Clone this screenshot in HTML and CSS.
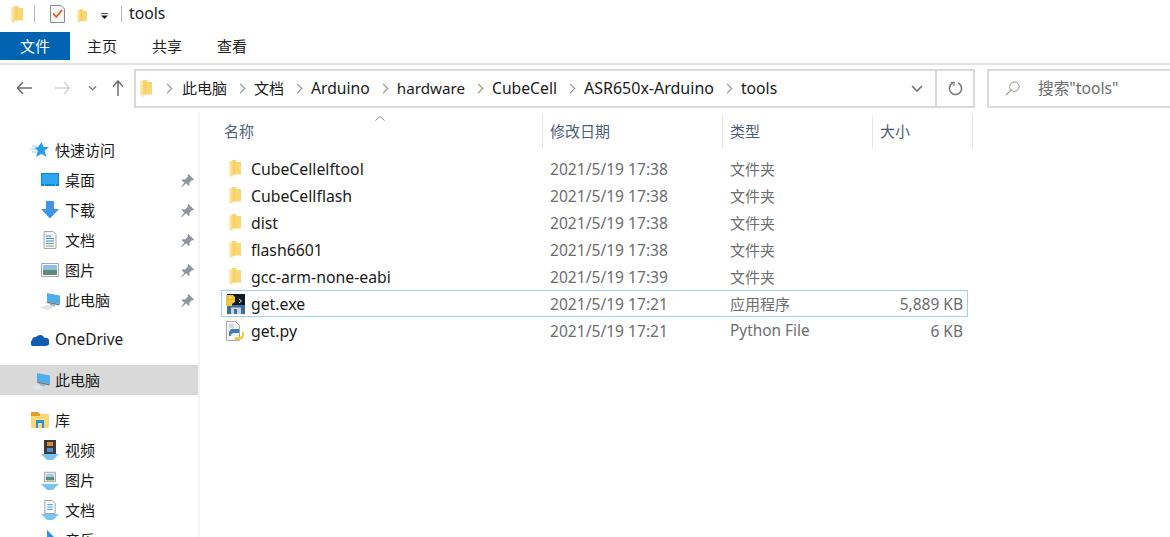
FILE: index.html
```html
<!DOCTYPE html>
<html lang="zh-CN">
<head>
<meta charset="utf-8">
<title>tools</title>
<link rel="stylesheet" href="styles.css">
</head>
<body>
<svg class="defs" width="0" height="0" aria-hidden="true">
  <defs>
    <linearGradient id="fold" x1="0" y1="0" x2="1" y2="0">
      <stop offset="0" stop-color="#fdf0c0"/><stop offset=".45" stop-color="#fbe08e"/><stop offset="1" stop-color="#f7cf68"/>
    </linearGradient>
    <symbol id="folder" viewBox="0 0 12 17">
      <path d="M3 0h4l1 2h4v12.500H3z" fill="#fad773"/>
      <path d="M0 .5l5 1.500v12.500H3.500V17L0 15.500z" fill="url(#fold)"/>
      <path d="M5 2h1v12.500H5z" fill="#f5cc62"/>
    </symbol>
    <symbol id="pin" viewBox="0 0 14 14">
      <path d="M8 0l6 6-1 1-1-.5-3 3 .3 2.500-1 1-2.800-3L1 14H0l3.500-4.500L.8 6.700l1-1 2.500.3 3-3L7 2z" fill="#8e959c"/>
    </symbol>
    <symbol id="pc" viewBox="0 0 20 17">
      <path d="M0 14.500l7-2.500 7 2-6 3z" fill="#dfe3e6"/>
      <path d="M7 0l13 2.500v8.500L7 8.500z" fill="#4faee8"/>
      <path d="M7 8.500L20 11l-1 1.500-12-2.500z" fill="#6f7d88"/>
      <path d="M10 10.500l5 1v2l-5-1z" fill="#a9b3ba"/>
    </symbol>
    <symbol id="tray" viewBox="0 0 18 6">
      <path d="M0 0h18l-6 6H6z" fill="#7cc4f0"/>
    </symbol>
  </defs>
</svg>

<header class="titlebar">
  <svg class="qa-folder"><use href="#folder"/></svg>
  <span class="qa-sep"></span>
  <svg class="qa-check" viewBox="0 0 15 18">
    <path d="M.5.500h10.500l3.500 3.500v13.500H.5z" fill="#f7f7f7" stroke="#8a8a8a"/>
    <path d="M3 8.500l3.300 3.500L12 5" fill="none" stroke="#e8541e" stroke-width="1.800"/>
  </svg>
  <svg class="qa-folder2"><use href="#folder"/></svg>
  <svg class="qa-drop" viewBox="0 0 8 7"><path d="M0 0h8v1H0zM0 3h8L4 7z" fill="#111"/></svg>
  <span class="qa-sep qa-sep2"></span>
  <span class="title-text">tools</span>
</header>

<nav class="tabs">
  <span class="tab tab-file">文件</span>
  <span class="tab">主页</span>
  <span class="tab">共享</span>
  <span class="tab">查看</span>
</nav>

<section class="navbar">
  <svg class="nav-back" viewBox="0 0 16 14"><path d="M7 1L1.500 7 7 13M1.500 7H16" fill="none" stroke="#6d6d6d" stroke-width="1.500"/></svg>
  <svg class="nav-fwd" viewBox="0 0 16 14"><path d="M9 1l5.500 6L9 13M14.500 7H0" fill="none" stroke="#d4d4d4" stroke-width="1.500"/></svg>
  <svg class="nav-down" viewBox="0 0 10 6"><path d="M1 1l4 4 4-4" fill="none" stroke="#808080" stroke-width="1.500"/></svg>
  <svg class="nav-up" viewBox="0 0 12 16"><path d="M1 6.500L6 1l5 5.500M6 1v15" fill="none" stroke="#6d6d6d" stroke-width="1.500"/></svg>
  <div class="address">
    <svg class="addr-folder"><use href="#folder"/></svg>
    <span class="crumb crumb-first crumb-narrow">此电脑</span>
    <span class="crumb crumb-narrow">文档</span>
    <span class="crumb">Arduino</span>
    <span class="crumb crumb-hw">hardware</span>
    <span class="crumb">CubeCell</span>
    <span class="crumb crumb-wide">ASR650x-Arduino</span>
    <span class="crumb">tools</span>
    <span class="addr-spacer"></span>
    <svg class="addr-chev" viewBox="0 0 12 7"><path d="M1 1l5 5 5-5" fill="none" stroke="#6d6d6d" stroke-width="1.500"/></svg>
    <span class="addr-refresh">
      <svg viewBox="0 0 16 16"><path d="M5 2.200A6.500 6.500 0 1 0 11 2.200" fill="none" stroke="#7d7d7d" stroke-width="1.800"/><path d="M3 1.500h3.500V5" fill="none" stroke="#7d7d7d" stroke-width="1.300"/></svg>
    </span>
  </div>
  <div class="search">
    <svg viewBox="0 0 16 16"><circle cx="10" cy="6" r="5" fill="none" stroke="#8c8c8c" stroke-width="1"/><path d="M6.500 9.500L1 15" stroke="#b08a6a" stroke-width="1.200"/></svg>
    <span>搜索"tools"</span>
  </div>
</section>

<main class="main">
  <aside class="sidebar">
    <div class="side-row top">
      <svg class="ic" viewBox="0 0 18 16"><path d="M10.500 0l2 5H18l-4.500 3.800L15.500 15l-5-3.300L5 15l1.800-6.200L3.500 6l3.500-1z" fill="#2a9be6"/><path d="M1 4h5M0 7h4M1 10h4" stroke="#8cc8f0"/></svg>
      <span>快速访问</span>
    </div>
    <div class="side-row sub">
      <svg class="ic" viewBox="0 0 18 14"><path d="M0 0h18v13H0z" fill="#0a86d8"/><path d="M1 1h16v10H1z" fill="#2ea5f2"/><path d="M3 12h1M14 12h1" stroke="#bfe3fa"/></svg>
      <span class="grow">桌面</span><svg class="pin"><use href="#pin"/></svg>
    </div>
    <div class="side-row sub">
      <svg class="ic" viewBox="0 0 18 18"><path d="M5 0h8v8h5l-9 9.500L0 8h5z" fill="#3f94e4"/></svg>
      <span class="grow">下载</span><svg class="pin"><use href="#pin"/></svg>
    </div>
    <div class="side-row sub">
      <svg class="ic" viewBox="0 0 18 18"><path d="M3 .5h9l3 3v14H3z" fill="#f4f5f5" stroke="#a8a8a8"/><path d="M5 5h5M5 7.500h8M5 10h8" stroke="#2f8fd8"/><path d="M5 12.500h8M5 15h8" stroke="#8a9a8a"/></svg>
      <span class="grow">文档</span><svg class="pin"><use href="#pin"/></svg>
    </div>
    <div class="side-row sub">
      <svg class="ic" viewBox="0 0 18 14"><path d="M.5.500h17v13H.5z" fill="#fff" stroke="#a8a8a8"/><path d="M2 2h14v5H2z" fill="#8fc0e6"/><path d="M2 7h14v5H2z" fill="#5f8a78"/></svg>
      <span class="grow">图片</span><svg class="pin"><use href="#pin"/></svg>
    </div>
    <div class="side-row sub">
      <svg class="ic pc-ic"><use href="#pc"/></svg>
      <span class="grow">此电脑</span><svg class="pin"><use href="#pin"/></svg>
    </div>
    <div class="side-row top gap">
      <svg class="ic" viewBox="0 0 18 12"><path d="M1.500 12a3 3 0 0 1-.5-5.500A3.500 3.500 0 0 1 5 3a5 5 0 0 1 8.500 1A4 4 0 0 1 15.500 12z" fill="#0f5cb0"/></svg>
      <span class="side-latin">OneDrive</span>
    </div>
    <div class="side-row top gap selected">
      <svg class="ic pc-ic"><use href="#pc"/></svg>
      <span>此电脑</span>
    </div>
    <div class="side-row top gap">
      <svg class="ic" viewBox="0 0 18 16"><path d="M0 0h7l2 2h9v14H0z" fill="#fcd876"/><path d="M0 0h7l2 2v2H0z" fill="#e0a020"/><path d="M5 8h8v8h-2v-5H7v5H5z" fill="#2d8fe0"/></svg>
      <span>库</span>
    </div>
    <div class="side-row sub">
      <span class="lib-ic"><svg class="lib-top" viewBox="0 0 12 14"><path d="M0 0h12v14H0z" fill="#3a3a3a"/><path d="M3 2h6v4H3z" fill="#d78a3a"/><path d="M3 8h6v4H3z" fill="#4f8fd0"/></svg><svg class="lib-tray"><use href="#tray"/></svg></span>
      <span>视频</span>
    </div>
    <div class="side-row sub">
      <span class="lib-ic"><svg class="lib-top" viewBox="0 0 14 12"><path d="M.5.500h13v11H.5z" fill="#fff" stroke="#999"/><path d="M2 2h10v4H2z" fill="#a8cde8"/><path d="M2 6h10v4H2z" fill="#5f8a78"/></svg><svg class="lib-tray"><use href="#tray"/></svg></span>
      <span>图片</span>
    </div>
    <div class="side-row sub">
      <span class="lib-ic"><svg class="lib-top" viewBox="0 0 12 15"><path d="M.5.500h8l3 3v11H.5z" fill="#fff" stroke="#999"/><path d="M3 5h6M3 7.500h6M3 10h6" stroke="#2f8fd8"/></svg><svg class="lib-tray"><use href="#tray"/></svg></span>
      <span>文档</span>
    </div>
    <div class="side-row sub">
      <span class="lib-ic"><svg class="lib-top" viewBox="0 0 12 14"><path d="M3 0l7 7H3z" fill="#2f8fe0"/></svg><svg class="lib-tray"><use href="#tray"/></svg></span>
      <span>音乐</span>
    </div>
  </aside>

  <section class="files">
    <div class="sort-caret"><svg viewBox="0 0 10 5"><path d="M.5 4.500L5 .5l4.500 4" fill="none" stroke="#8a8a8a"/></svg></div>
    <div class="file-head">
      <span class="col-name">名称</span>
      <span class="col-date">修改日期</span>
      <span class="col-type">类型</span>
      <span class="col-size">大小</span>
    </div>
    <div class="file-rows">
      <div class="file-row"><span class="col-name"><svg class="f-ic"><use href="#folder"/></svg><span class="f-name">CubeCellelftool</span></span><span class="col-date">2021/5/19 17:38</span><span class="col-type">文件夹</span><span class="col-size"></span></div>
      <div class="file-row"><span class="col-name"><svg class="f-ic"><use href="#folder"/></svg><span class="f-name">CubeCellflash</span></span><span class="col-date">2021/5/19 17:38</span><span class="col-type">文件夹</span><span class="col-size"></span></div>
      <div class="file-row"><span class="col-name"><svg class="f-ic"><use href="#folder"/></svg><span class="f-name">dist</span></span><span class="col-date">2021/5/19 17:38</span><span class="col-type">文件夹</span><span class="col-size"></span></div>
      <div class="file-row"><span class="col-name"><svg class="f-ic"><use href="#folder"/></svg><span class="f-name">flash6601</span></span><span class="col-date">2021/5/19 17:38</span><span class="col-type">文件夹</span><span class="col-size"></span></div>
      <div class="file-row"><span class="col-name"><svg class="f-ic"><use href="#folder"/></svg><span class="f-name">gcc-arm-none-eabi</span></span><span class="col-date">2021/5/19 17:39</span><span class="col-type">文件夹</span><span class="col-size"></span></div>
      <div class="file-row focused"><span class="col-name"><svg class="f-ic big" viewBox="0 0 20 20"><path d="M1 0h18v12H1z" fill="#141a24"/><path d="M1 11h18v9H1z" fill="#3c6f9e"/><path d="M5 13.500h10V20H5z" fill="#c9d3dc"/><path d="M8 15h3v5H8z" fill="#3c6f9e"/><path d="M0 1h7l2 2v5l-3 2v2H1L0 11z" fill="#f0c53e"/><path d="M4 3h1v1H4z" fill="#fff"/><path d="M13 5l2.500 2-2.500 2" fill="none" stroke="#dfe6ee"/></svg><span class="f-name">get.exe</span></span><span class="col-date">2021/5/19 17:21</span><span class="col-type">应用程序</span><span class="col-size">5,889 KB</span></div>
      <div class="file-row"><span class="col-name"><svg class="f-ic big" viewBox="0 0 20 20"><path d="M.5.500h9l4 4v15H.5z" fill="#f5f6f7" stroke="#a6a6a6"/><path d="M3 4h5M3 6h5" stroke="#b5b5b5"/><path d="M8 8h5v4H8a3 3 0 0 0-3 3H3v-3a4 4 0 0 1 5-4z" fill="#3f7cb8"/><path d="M13 19H9v-3h4a3 3 0 0 0 3-3v-2h2v3a5 5 0 0 1-5 5z" fill="#f4c93e"/></svg><span class="f-name">get.py</span></span><span class="col-date">2021/5/19 17:21</span><span class="col-type type-latin">Python File</span><span class="col-size">6 KB</span></div>
    </div>
  </section>
</main>
</body>
</html>
```
FILE: styles.css
```css
* { box-sizing: border-box; }
html, body { margin: 0; height: 100%; }
body {
  width: 1170px;
  height: 537px;
  overflow: hidden;
  background: #fff;
  color: #1a1a1a;
  font-family: "Noto Sans", "Noto Sans CJK SC", sans-serif;
  font-size: 15px;
  line-height: 20px;
}
.defs { display: block; height: 0; }

.titlebar { display: flex; align-items: center; height: 32px; padding: 0 0 4px 11px; }
.qa-folder { width: 12px; height: 17px; }
.qa-sep { width: 1px; height: 16px; background: #b5b5b5; margin-left: 11px; }
.qa-check { width: 15px; height: 18px; margin-left: 15px; }
.qa-folder2 { width: 12px; height: 14px; margin-left: 11px; margin-top: 3px; }
.qa-drop { width: 7px; height: 6px; margin-left: 13px; margin-top: 3px; }
.qa-sep2 { margin-left: 13px; }
.title-text { margin-left: 7px; font-size: 15.7px; color: #222; margin-top: -2px; }

.tabs { display: flex; height: 28px; }
.tab { width: 65px; padding-right: 1px; text-align: center; font-size: 15px; line-height: 29px; color: #222; }
.tab-file { width: 70px; padding-right: 0; background: #0063b1; color: #fff; line-height: 28px; }

.navbar { display: flex; align-items: center; height: 49px; border-top: 2px solid #e4e4e4; padding: 4px 0 5px; margin-top: 3px; }
.nav-back { width: 16px; height: 14px; margin-left: 16px; }
.nav-fwd { width: 16px; height: 14px; margin-left: 23px; }
.nav-down { width: 9px; height: 6px; margin-left: 17px; }
.nav-up { width: 12px; height: 16px; margin-left: 15px; }
.address { display: flex; align-items: center; width: 841px; height: 39px; margin-left: 10px; border: 2px solid #d9d9d9; padding-left: 4px; }
.addr-folder { width: 12px; height: 17px; flex: none; }
.crumb { display: flex; align-items: center; white-space: nowrap; font-size: 15.7px; }
.crumb::before { content: ""; width: 6px; height: 6px; border-top: 1.500px solid #8a8a8a; border-right: 1.500px solid #8a8a8a; transform: rotate(45deg); margin: 0 10px; }
.crumb-first::before { margin: 0 11px 0 12px; }
.crumb-narrow { font-size: 15px; }
.crumb-hw { font-size: 15.2px; }
.crumb-wide { font-size: 16px; }
.addr-spacer { flex: 1; }
.addr-chev { width: 12px; height: 7px; margin-right: 12px; }
.addr-refresh { display: flex; align-items: center; justify-content: center; width: 38px; height: 100%; border-left: 2px solid #d9d9d9; }
.addr-refresh svg { width: 15px; height: 15px; }
.search { display: flex; align-items: center; flex: 1; height: 39px; margin-left: 12px; border: 2px solid #d9d9d9; border-right: 0; padding-left: 16px; color: #6d6d6d; font-size: 15.7px; white-space: nowrap; }
.search svg { width: 15px; height: 15px; margin-right: 18px; }

.main { display: flex; height: 428px; overflow: hidden; }
.sidebar { width: 200px; flex: none; border-right: 2px solid #f3f3f3; padding-top: 23px; }
.side-row { display: flex; align-items: center; height: 30px; font-size: 15px; width: 198px; flex: none; }
.side-row.top { padding-left: 31px; }
.side-row.sub { padding-left: 41px; }
.side-row.gap { margin-top: 10px; }
.side-row .ic { width: 18px; height: 18px; margin-right: 6px; flex: none; }
.side-row .pc-ic { width: 20px; height: 17px; margin-left: -1px; margin-right: 5px; margin-top: 2px; }
.side-row.selected { background: #d9d9d9; }
.side-latin { font-size: 15.4px; }
.grow { flex: 1; }
.pin { width: 13px; height: 13px; margin-right: 4px; }
.lib-ic { display: flex; flex-direction: column; align-items: center; width: 18px; height: 20px; margin-right: 6px; flex: none; }
.lib-top { width: 12px; height: 14px; }
.lib-tray { width: 18px; height: 6px; }

.files { position: relative; flex: 1; padding-left: 17px; }
.sort-caret { position: absolute; left: 175px; top: 3px; line-height: 0; }
.sort-caret svg { width: 10px; height: 5px; }
.file-head { display: flex; height: 36px; align-items: center; color: #4c607a; font-size: 15px; padding-top: 3px; }
.file-head > span { height: 33px; line-height: 33px; border-right: 1px solid #e6e6e6; padding-left: 7px; }
.col-name { display: flex; align-items: center; width: 326px; flex: none; }
.col-date { width: 180px; flex: none; padding-left: 7px; }
.col-type { width: 150px; flex: none; padding-left: 7px; }
.col-size { width: 100px; flex: none; }
.file-rows { padding-top: 7px; }
.file-row { display: flex; align-items: center; height: 27px; width: 747px; margin-left: 4px; color: #6d6d6d; font-size: 15px; }
.file-row .col-date { font-size: 15.6px; }
.file-row .type-latin { font-size: 15.4px; }
.file-row .col-name { width: 322px; color: #1a1a1a; padding-left: 6px; }
.file-row .col-size { width: 90px; text-align: right; font-size: 15.5px; }
.file-row.focused { box-shadow: inset 0 0 0 1px #99d1ff; }
.f-ic { width: 12px; height: 17px; flex: none; margin-left: 2px; margin-right: 10px; }
.f-ic.big { width: 20px; height: 20px; margin-left: -1px; margin-right: 5px; }
.f-name { white-space: nowrap; font-size: 15.8px; }
```
